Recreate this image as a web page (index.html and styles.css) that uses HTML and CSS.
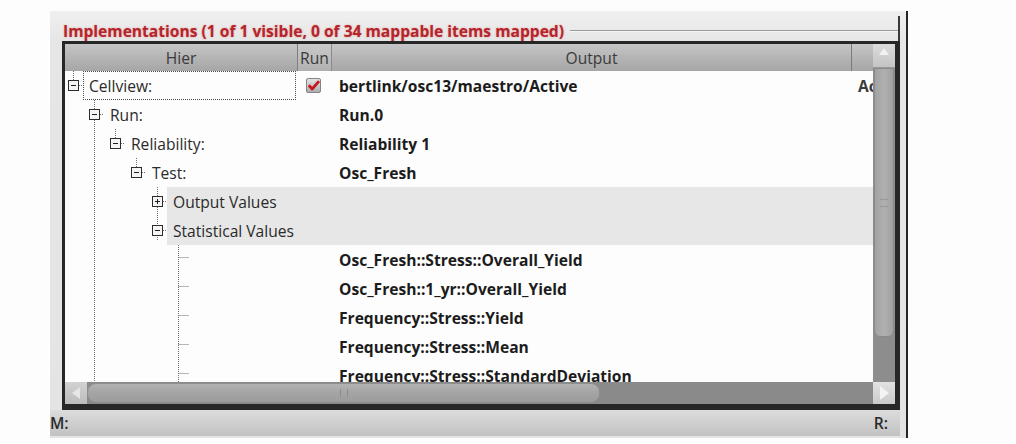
FILE: index.html
```html
<!DOCTYPE html>
<html>
<head>
<meta charset="utf-8">
<link rel="stylesheet" href="styles.css">
</head>
<body>
<div class="window">
  <div class="group-title">
    <span class="title">Implementations (1 of 1 visible, 0 of 34 mappable items mapped)</span>
    <span class="rule"></span>
  </div>
  <div class="tree">
    <div class="viewport">
      <div class="header">
        <div class="hcell c-hier">Hier</div>
        <div class="hcell c-run">Run</div>
        <div class="hcell c-out">Output</div>
        <div class="hcell c-extra"></div>
      </div>
      <div class="rows">
        <svg class="branches" width="808" height="311" viewBox="0 0 808 311">
          <g stroke="#6f6f6f" stroke-width="1" stroke-dasharray="1 1" fill="none">
            <path d="M8.5 0V9"/>
            <path d="M14 14.5H18"/>
            <path d="M29.5 29V311"/>
            <path d="M35 43.5H39"/>
            <path d="M50.5 58V67"/>
            <path d="M56 72.5H60"/>
            <path d="M71.5 87V96"/>
            <path d="M77 101.5H81"/>
            <path d="M92.5 116V169"/>
            <path d="M98 130.5H102"/>
            <path d="M98 159.5H102"/>
            <path d="M113.5 174V311"/>
            <path d="M113.5 186.5H124"/>
            <path d="M113.5 215.5H124"/>
            <path d="M113.5 244.5H124"/>
            <path d="M113.5 273.5H124"/>
            <path d="M113.5 302.5H124"/>
          </g>
        </svg>
        <div class="row">
          <div class="cell c-hier l0"><span class="exp minus"></span><span class="label focus">Cellview:</span></div>
          <div class="cell c-run">
            <svg class="check" width="15" height="15" viewBox="0 0 15 15">
              <defs><linearGradient id="cb" x1="0" y1="0" x2="0" y2="1"><stop offset="0" stop-color="#e4e4e4"/><stop offset="1" stop-color="#acacac"/></linearGradient></defs>
              <rect x="0.5" y="0.5" width="14" height="14" rx="1.5" fill="url(#cb)" stroke="#858585"/>
              <path d="M2.8 7.3L6.2 11L13 3.2" stroke="#c8161f" stroke-width="2.8" fill="none" stroke-linejoin="round"/>
            </svg>
          </div>
          <div class="cell c-out">bertlink/osc13/maestro/Active</div>
          <div class="cell c-extra">Ac</div>
        </div>
        <div class="row">
          <div class="cell c-hier l1"><span class="exp minus"></span><span class="label">Run:</span></div>
          <div class="cell c-run"></div>
          <div class="cell c-out">Run.0</div>
          <div class="cell c-extra"></div>
        </div>
        <div class="row">
          <div class="cell c-hier l2"><span class="exp minus"></span><span class="label">Reliability:</span></div>
          <div class="cell c-run"></div>
          <div class="cell c-out">Reliability 1</div>
          <div class="cell c-extra"></div>
        </div>
        <div class="row">
          <div class="cell c-hier l3"><span class="exp minus"></span><span class="label">Test:</span></div>
          <div class="cell c-run"></div>
          <div class="cell c-out">Osc_Fresh</div>
          <div class="cell c-extra"></div>
        </div>
        <div class="row sel">
          <div class="cell c-hier l4"><span class="exp plus"></span><span class="label">Output Values</span></div>
          <div class="cell c-run"></div>
          <div class="cell c-out"></div>
          <div class="cell c-extra"></div>
        </div>
        <div class="row sel">
          <div class="cell c-hier l4"><span class="exp minus"></span><span class="label">Statistical Values</span></div>
          <div class="cell c-run"></div>
          <div class="cell c-out"></div>
          <div class="cell c-extra"></div>
        </div>
        <div class="row">
          <div class="cell c-hier"></div>
          <div class="cell c-run"></div>
          <div class="cell c-out">Osc_Fresh::Stress::Overall_Yield</div>
          <div class="cell c-extra"></div>
        </div>
        <div class="row">
          <div class="cell c-hier"></div>
          <div class="cell c-run"></div>
          <div class="cell c-out">Osc_Fresh::1_yr::Overall_Yield</div>
          <div class="cell c-extra"></div>
        </div>
        <div class="row">
          <div class="cell c-hier"></div>
          <div class="cell c-run"></div>
          <div class="cell c-out">Frequency::Stress::Yield</div>
          <div class="cell c-extra"></div>
        </div>
        <div class="row">
          <div class="cell c-hier"></div>
          <div class="cell c-run"></div>
          <div class="cell c-out">Frequency::Stress::Mean</div>
          <div class="cell c-extra"></div>
        </div>
        <div class="row">
          <div class="cell c-hier"></div>
          <div class="cell c-run"></div>
          <div class="cell c-out">Frequency::Stress::StandardDeviation</div>
          <div class="cell c-extra"></div>
        </div>
      </div>
    </div>
    <div class="vscroll">
      <div class="sbtn up"><span class="tri tri-up"></span></div>
      <div class="vthumb"><span class="vgrip"></span></div>
      <div class="strack"></div>
    </div>
    <div class="hscroll">
      <div class="sbtn left"><span class="tri tri-left"></span></div>
      <div class="hthumb"><span class="hgrip"></span></div>
      <div class="strack"></div>
      <div class="sbtn right"><span class="tri tri-right"></span></div>
    </div>
  </div>
  <div class="status">
    <span>M:</span>
    <span>R:</span>
  </div>
</div>
</body>
</html>
```
FILE: styles.css
```css
html, body {
  margin: 0;
  padding: 0;
  background: #fdfdfd;
}

body {
  font-family: "Open Sans", "Noto Sans", sans-serif;
  color: #222;
}

.window {
  margin: 11px 0 0 50px;
  width: 858px;
  height: 427px;
  box-sizing: border-box;
  padding-right: 6px;
  background: linear-gradient(#f0f0f0, #e6e6e6 30px, #e4e4e4);
  border-right: 2px solid #262626;
  display: flex;
  flex-direction: column;
}

.group-title {
  margin: 5px 0 0 12px;
  height: 25px;
  box-sizing: border-box;
  padding-top: 5px;
  display: flex;
  align-items: center;
  border-right: 2px solid #3a3a3a;
}

.title {
  font-weight: 700;
  font-size: 15.6px;
  line-height: 20px;
  color: #b3262c;
  text-shadow: 0 0 2px rgba(235, 130, 130, 0.8);
  white-space: nowrap;
  padding-left: 1px;
}

.rule {
  flex: 1;
  margin-left: 6px;
  height: 0;
  border-top: 1px solid #9a9a9a;
  border-bottom: 1px solid #f6f6f6;
}

.tree {
  margin-left: 12px;
  height: 369px;
  box-sizing: border-box;
  border-style: solid;
  border-color: #272727;
  border-width: 3px 5px 6px 3px;
  display: grid;
  grid-template-columns: 808px 22px;
  grid-template-rows: 338px 22px;
  background: #fdfdfd;
}

.viewport {
  overflow: hidden;
  display: flex;
  flex-direction: column;
}

.header {
  height: 27px;
  flex: none;
  display: flex;
  background: linear-gradient(#c6c6c6, #b3b3b3 55%, #a6a6a6);
  font-size: 15.6px;
  color: #3a3a3a;
}

.hcell {
  display: flex;
  align-items: center;
  justify-content: center;
  box-sizing: border-box;
  line-height: 20px;
}

.c-hier { width: 232px; flex: none; }
.c-run { width: 35px; flex: none; }
.c-out { width: 520px; flex: none; }
.c-extra { width: 21px; flex: none; overflow: hidden; }

.header .c-run {
  border-left: 1px solid #7e7e7e;
  border-right: 1px solid #8a8a8a;
  background: linear-gradient(#cacaca, #b0b0b0);
}

.header .c-out {
  border-right: 1px solid #7a7a7a;
}

.rows {
  position: relative;
  height: 311px;
  overflow: hidden;
}

.branches {
  position: absolute;
  left: 0;
  top: 0;
}

.row {
  position: relative;
  height: 29px;
  display: flex;
  font-size: 15.6px;
  line-height: 20px;
}

.cell {
  display: flex;
  align-items: center;
  box-sizing: border-box;
  white-space: nowrap;
}

.l0 { padding-left: 3px; }
.l1 { padding-left: 24px; }
.l2 { padding-left: 45px; }
.l3 { padding-left: 66px; }
.l4 { padding-left: 87px; }

.exp {
  position: relative;
  width: 11px;
  height: 11px;
  box-sizing: border-box;
  border: 1px solid #2c2c2c;
  background: #f4f4f4;
  flex: none;
  margin-right: 4px;
}

.exp::before {
  content: "";
  position: absolute;
  left: 2px;
  top: 4px;
  width: 5px;
  height: 1px;
  background: #1e1e1e;
}

.plus::after {
  content: "";
  position: absolute;
  left: 4px;
  top: 2px;
  width: 1px;
  height: 5px;
  background: #1e1e1e;
}

.label {
  flex: 1;
  align-self: stretch;
  display: flex;
  align-items: center;
  padding-left: 6px;
  color: #2a2a2a;
}

.focus {
  border: 1px dotted #4a4a4a;
  padding-left: 5px;
  margin-right: 1px;
}

.row .c-run {
  padding-left: 9px;
}

.row .c-out {
  padding-left: 7px;
  font-weight: 700;
  color: #1c1c1c;
}

.row .c-extra {
  padding-left: 6px;
  font-weight: 700;
  color: #3c3c3c;
}

.sel .label,
.sel .c-run,
.sel .c-out,
.sel .c-extra {
  background: #e7e7e7;
}

.vscroll {
  background: #8d8d8d;
  display: flex;
  flex-direction: column;
}

.sbtn {
  display: flex;
  align-items: center;
  justify-content: center;
  box-sizing: border-box;
}

.sbtn.up {
  height: 24px;
  background: linear-gradient(#dcdcdc, #c4c4c4);
  border-bottom: 1px solid #9a9a9a;
  align-items: flex-start;
  padding-top: 4px;
}

.vthumb {
  height: 267px;
  margin: 0 1px;
  background: linear-gradient(90deg, #a2a2a2, #b0b0b0 50%, #a0a0a0);
  border: 1px solid #8a8a8a;
  border-radius: 0 0 6px 6px;
  display: flex;
  align-items: center;
  justify-content: center;
}

.vgrip {
  width: 8px;
  height: 6px;
  border-top: 1px solid #999;
  border-bottom: 1px solid #999;
}

.strack {
  flex: 1;
}

.hscroll {
  grid-column: 1 / 3;
  background: #8a8a8a;
  display: flex;
}

.sbtn.left {
  width: 22px;
  background: linear-gradient(#d2d2d2, #bcbcbc);
}

.sbtn.right {
  width: 22px;
  background: linear-gradient(#e2e2e2, #cacaca);
}

.hthumb {
  width: 511px;
  margin: 1px 0;
  background: linear-gradient(#b2b2b2, #a4a4a4 50%, #9c9c9c);
  border: 1px solid #8e8e8e;
  border-radius: 9px;
  display: flex;
  align-items: center;
  justify-content: center;
}

.hgrip {
  width: 6px;
  height: 8px;
  border-left: 1px solid #8c8c8c;
  border-right: 1px solid #8c8c8c;
}

.tri {
  width: 0;
  height: 0;
  border-style: solid;
}

.tri-up {
  border-width: 0 5px 7px 5px;
  border-color: transparent transparent #f2f2f2 transparent;
}

.tri-left {
  border-width: 6px 8px 6px 0;
  border-color: transparent #e6e6e6 transparent transparent;
}

.tri-right {
  border-width: 7px 0 7px 9px;
  border-color: transparent transparent transparent #f4f4f4;
}

.status {
  height: 26px;
  flex: none;
  display: flex;
  justify-content: space-between;
  align-items: center;
  padding-right: 12px;
  background: linear-gradient(#dcdcdc, #cfcfcf 50%, #c2c2c2);
  font-size: 15.6px;
  font-weight: 600;
  color: #2a2a2a;
}
```
